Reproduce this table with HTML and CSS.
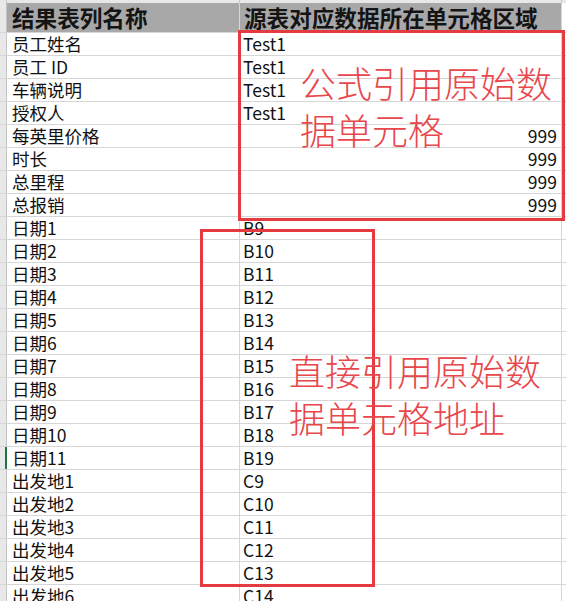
FILE: index.html
```html
<!DOCTYPE html>
<html lang="zh-CN">
<head>
<meta charset="utf-8">
<title>结果表列名称</title>
<link rel="stylesheet" href="styles.css">
</head>
<body>
<div class="sheet">
  <div class="row top"><div class="gut"></div><div class="a"></div><div class="b"></div><div class="rest"></div></div>
  <div class="row head"><div class="gut"></div><div class="a">结果表列名称</div><div class="b">源表对应数据所在单元格区域</div><div class="rest"></div></div>
  <div class="row"><div class="gut"></div><div class="a">员工姓名</div><div class="b">Test1</div><div class="rest"></div></div>
  <div class="row"><div class="gut"></div><div class="a">员工 ID</div><div class="b">Test1</div><div class="rest"></div></div>
  <div class="row"><div class="gut"></div><div class="a">车辆说明</div><div class="b">Test1</div><div class="rest"></div></div>
  <div class="row"><div class="gut"></div><div class="a">授权人</div><div class="b">Test1</div><div class="rest"></div></div>
  <div class="row"><div class="gut"></div><div class="a">每英里价格</div><div class="b num">999</div><div class="rest"></div></div>
  <div class="row"><div class="gut"></div><div class="a">时长</div><div class="b num">999</div><div class="rest"></div></div>
  <div class="row"><div class="gut"></div><div class="a">总里程</div><div class="b num">999</div><div class="rest"></div></div>
  <div class="row"><div class="gut"></div><div class="a">总报销</div><div class="b num">999</div><div class="rest"></div></div>
  <div class="row"><div class="gut"></div><div class="a">日期1</div><div class="b">B9</div><div class="rest"></div></div>
  <div class="row"><div class="gut"></div><div class="a">日期2</div><div class="b">B10</div><div class="rest"></div></div>
  <div class="row"><div class="gut"></div><div class="a">日期3</div><div class="b">B11</div><div class="rest"></div></div>
  <div class="row"><div class="gut"></div><div class="a">日期4</div><div class="b">B12</div><div class="rest"></div></div>
  <div class="row"><div class="gut"></div><div class="a">日期5</div><div class="b">B13</div><div class="rest"></div></div>
  <div class="row"><div class="gut"></div><div class="a">日期6</div><div class="b">B14</div><div class="rest"></div></div>
  <div class="row"><div class="gut"></div><div class="a">日期7</div><div class="b">B15</div><div class="rest"></div></div>
  <div class="row"><div class="gut"></div><div class="a">日期8</div><div class="b">B16</div><div class="rest"></div></div>
  <div class="row"><div class="gut"></div><div class="a">日期9</div><div class="b">B17</div><div class="rest"></div></div>
  <div class="row"><div class="gut"></div><div class="a">日期10</div><div class="b">B18</div><div class="rest"></div></div>
  <div class="row"><div class="gut active"></div><div class="a">日期11</div><div class="b">B19</div><div class="rest"></div></div>
  <div class="row"><div class="gut"></div><div class="a">出发地1</div><div class="b">C9</div><div class="rest"></div></div>
  <div class="row"><div class="gut"></div><div class="a">出发地2</div><div class="b">C10</div><div class="rest"></div></div>
  <div class="row"><div class="gut"></div><div class="a">出发地3</div><div class="b">C11</div><div class="rest"></div></div>
  <div class="row"><div class="gut"></div><div class="a">出发地4</div><div class="b">C12</div><div class="rest"></div></div>
  <div class="row"><div class="gut"></div><div class="a">出发地5</div><div class="b">C13</div><div class="rest"></div></div>
  <div class="row"><div class="gut"></div><div class="a">出发地6</div><div class="b">C14</div><div class="rest"></div></div>

  <div class="mark mark-formula"></div>
  <div class="note note-formula">公式引用原始数<br>据单元格</div>
  <div class="mark mark-direct"></div>
  <div class="note note-direct">直接引用原始数<br>据单元格地址</div>
</div>
</body>
</html>
```

FILE: styles.css
```css
html, body {
  margin: 0;
  padding: 0;
  background: #ffffff;
}

body {
  width: 566px;
  height: 601px;
  overflow: hidden;
  font-family: "Noto Sans CJK SC", "Noto Sans", sans-serif;
  color: #111111;
}

.sheet {
  position: relative;
  width: 566px;
}

.row {
  display: flex;
  height: 22px;
  border-bottom: 1px solid #d6d6d6;
  font-size: 17.5px;
  line-height: 22px;
  white-space: nowrap;
}

.gut {
  width: 7px;
  flex: none;
  box-sizing: border-box;
  background: #e8e8e8;
  border-right: 1px solid #c4c4c4;
}

.gut.active {
  border-right: 2px solid #217346;
}

.a {
  width: 233px;
  flex: none;
  box-sizing: border-box;
  padding-left: 5px;
  border-right: 1px solid #d6d6d6;
}

.b {
  width: 322px;
  flex: none;
  box-sizing: border-box;
  padding: 0 4px 0 3px;
  border-right: 1px solid #d6d6d6;
}

.b.num {
  text-align: right;
}

.rest {
  flex: 1;
}

.top {
  height: 3px;
  border-bottom: none;
}

.top .gut,
.top .a,
.top .b,
.top .rest {
  background: #e8e8e8;
}

.top .a,
.top .b {
  border-right-color: #c4c4c4;
}

.head {
  height: 29px;
  line-height: 29px;
  font-size: 22.6px;
  font-weight: 700;
  color: #141414;
}

.head .a,
.head .b {
  background: #a8a8a8;
}

.head .b {
  padding-left: 4px;
}

.mark {
  position: absolute;
  box-sizing: border-box;
  border: 3px solid #e53a3f;
}

.mark-formula {
  left: 238px;
  top: 30px;
  width: 327px;
  height: 191px;
}

.mark-direct {
  left: 200px;
  top: 229px;
  width: 175px;
  height: 358px;
}

.note {
  position: absolute;
  font-size: 36px;
  line-height: 47px;
  font-weight: 300;
  color: #e8474c;
  white-space: nowrap;
}

.note-formula {
  left: 300px;
  top: 59px;
}

.note-direct {
  left: 289px;
  top: 347px;
}
```
